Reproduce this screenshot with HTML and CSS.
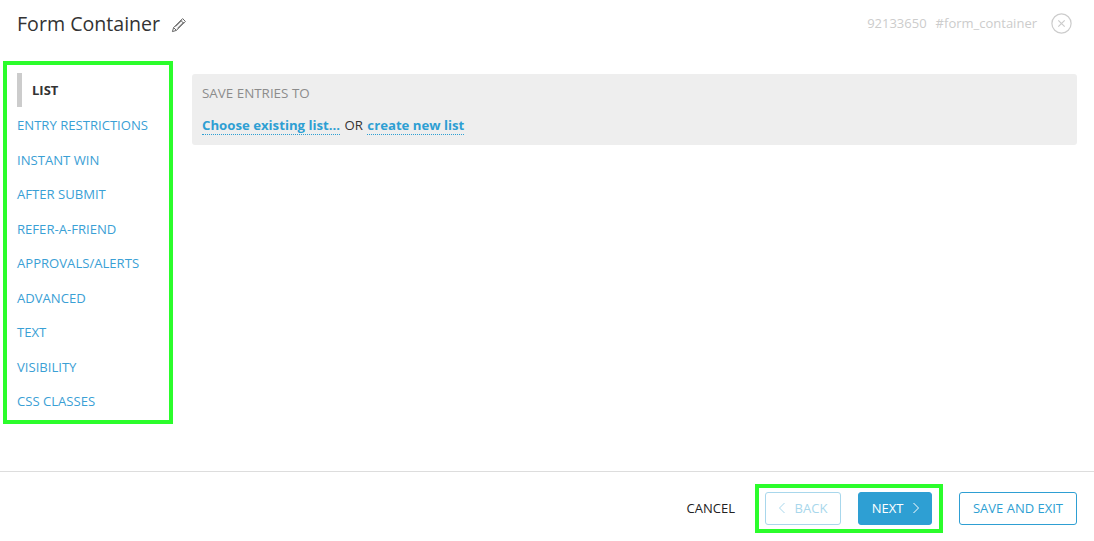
FILE: index.html
```html
<!DOCTYPE html>
<html lang="en">
<head>
  <meta charset="UTF-8">
  <title>Form Container</title>
  <link rel="stylesheet" href="styles.css">
</head>
<body>
  <div class="page">
    <header class="top">
      <div class="title-wrap">
        <h1>Form Container</h1>
        <svg class="pencil" width="16" height="16" viewBox="0 0 16 16" fill="none" stroke="#666" stroke-width="1">
          <path d="M11.6 1.6l2.8 2.8L5.4 13.4 1.4 14.6l1.2-4z"/>
          <path d="M9.8 3.4l2.8 2.8M2.6 10.6l2.8 2.8M4.6 9.6l6.2-6.2M6.4 11.4l6.2-6.2"/>
        </svg>
      </div>
      <div class="meta">
        <span class="meta-id">92133650</span>
        <span class="meta-id">#form_container</span>
        <svg class="close" width="21" height="21" viewBox="0 0 21 21" fill="none" stroke="#ccc" stroke-width="1.2">
          <circle cx="10.5" cy="10.5" r="9.6"/>
          <path d="M7.3 7.3l6.4 6.4M13.7 7.3l-6.4 6.4"/>
        </svg>
      </div>
    </header>

    <div class="content">
      <nav class="side">
        <a class="side-item active">LIST</a>
        <a class="side-item">ENTRY RESTRICTIONS</a>
        <a class="side-item">INSTANT WIN</a>
        <a class="side-item">AFTER SUBMIT</a>
        <a class="side-item">REFER-A-FRIEND</a>
        <a class="side-item">APPROVALS/ALERTS</a>
        <a class="side-item">ADVANCED</a>
        <a class="side-item">TEXT</a>
        <a class="side-item">VISIBILITY</a>
        <a class="side-item">CSS CLASSES</a>
      </nav>
      <section class="panel">
        <div class="panel-label">SAVE ENTRIES TO</div>
        <div class="panel-links">
          <a class="dotted">Choose existing list...</a> <span class="or">OR</span> <a class="dotted">create new list</a>
        </div>
      </section>
    </div>

    <footer class="bottom">
      <a class="cancel">CANCEL</a>
      <div class="step-btns">
        <button class="btn btn-back">
          <svg width="8" height="12" viewBox="0 0 8 12" fill="none" stroke="currentColor" stroke-width="1"><path d="M6.5 1L1.5 6l5 5"/></svg>
          BACK
        </button>
        <button class="btn btn-next">
          NEXT
          <svg width="8" height="12" viewBox="0 0 8 12" fill="none" stroke="currentColor" stroke-width="1"><path d="M1.5 1l5 5-5 5"/></svg>
        </button>
      </div>
      <button class="btn btn-save">SAVE AND EXIT</button>
    </footer>
  </div>
</body>
</html>
```

FILE: styles.css
```css
* {
  box-sizing: border-box;
}
body {
  margin: 0;
  padding: 0;
  background: #fff;
  font-family: "Open Sans", "Liberation Sans", sans-serif;
  color: #333;
}
.page {
  width: 1094px;
  height: 541px;
  display: flex;
  flex-direction: column;
  overflow: hidden;
}

.top {
  height: 61px;
  flex-shrink: 0;
  padding: 0 22px 15px 17px;
  display: flex;
  align-items: center;
  justify-content: space-between;
}
.title-wrap {
  display: flex;
  align-items: center;
  gap: 11px;
}
.pencil {
  margin-top: 3px;
}
h1 {
  margin: 0;
  font-size: 19.6px;
  font-weight: 400;
  color: #333;
}
.meta {
  display: flex;
  align-items: center;
  gap: 9px;
  font-size: 13px;
  color: #ccc;
}
.close {
  margin-left: 5px;
}

.content {
  height: 363px;
  flex-shrink: 0;
  display: flex;
  align-items: flex-start;
}
.side {
  width: 170px;
  height: 363px;
  margin-left: 3px;
  flex-shrink: 0;
  border: 4px solid #2bfd2b;
  padding: 8px 0 0 10px;
  display: flex;
  flex-direction: column;
}
.side-item {
  height: 34.5px;
  padding-top: 1px;
  display: flex;
  align-items: center;
  font-size: 13.1px;
  color: #3aa0d5;
}
.side-item.active {
  height: 34px;
  margin-bottom: 0.5px;
  padding-top: 0;
  border-left: 5px solid #ccc;
  padding-left: 10px;
  font-weight: 700;
  font-size: 13px;
  color: #333;
}
.panel {
  width: 885px;
  height: 71px;
  margin: 13px 0 0 19px;
  background: #eee;
  border-radius: 3px;
  padding: 11px 10px 0;
}
.panel-label {
  font-size: 13.4px;
  line-height: 17px;
  color: #8c8c8c;
}
.panel-links {
  margin-top: 15px;
  font-size: 13.2px;
  line-height: 17px;
}
.dotted {
  font-weight: 700;
  color: #2e9fd3;
  border-bottom: 1px dotted #2e9fd3;
}
.or {
  margin: 0 1px;
  color: #333;
}

.bottom {
  height: 70px;
  margin-top: 47px;
  flex-shrink: 0;
  border-top: 1px solid #ddd;
  padding: 4px 17px 0 0;
  display: flex;
  align-items: center;
  justify-content: flex-end;
}
.cancel {
  font-size: 13px;
  color: #222;
  margin-right: 20px;
  margin-bottom: 2px;
}
.step-btns {
  height: 49px;
  border: 4px solid #2bfd2b;
  padding: 0 7px 0 6px;
  display: flex;
  align-items: center;
  gap: 17px;
  margin-right: 16px;
}
button {
  background: transparent;
  border: none;
  font-family: inherit;
}
.btn {
  height: 33px;
  border-radius: 3px;
  border: 1px solid #2e9fd3;
  font-size: 13px;
  display: flex;
  align-items: center;
  justify-content: center;
  padding: 0 0 2px;
}
.btn-back {
  width: 76px;
  gap: 9px;
  padding-right: 1px;
  color: #a8d7ec;
  border-color: #a8d7ec;
}
.btn-next {
  width: 74px;
  gap: 9px;
  padding-left: 2px;
  background: #2e9fd3;
  color: #fff;
}
.btn-save {
  width: 118px;
  color: #2e9fd3;
}
```
